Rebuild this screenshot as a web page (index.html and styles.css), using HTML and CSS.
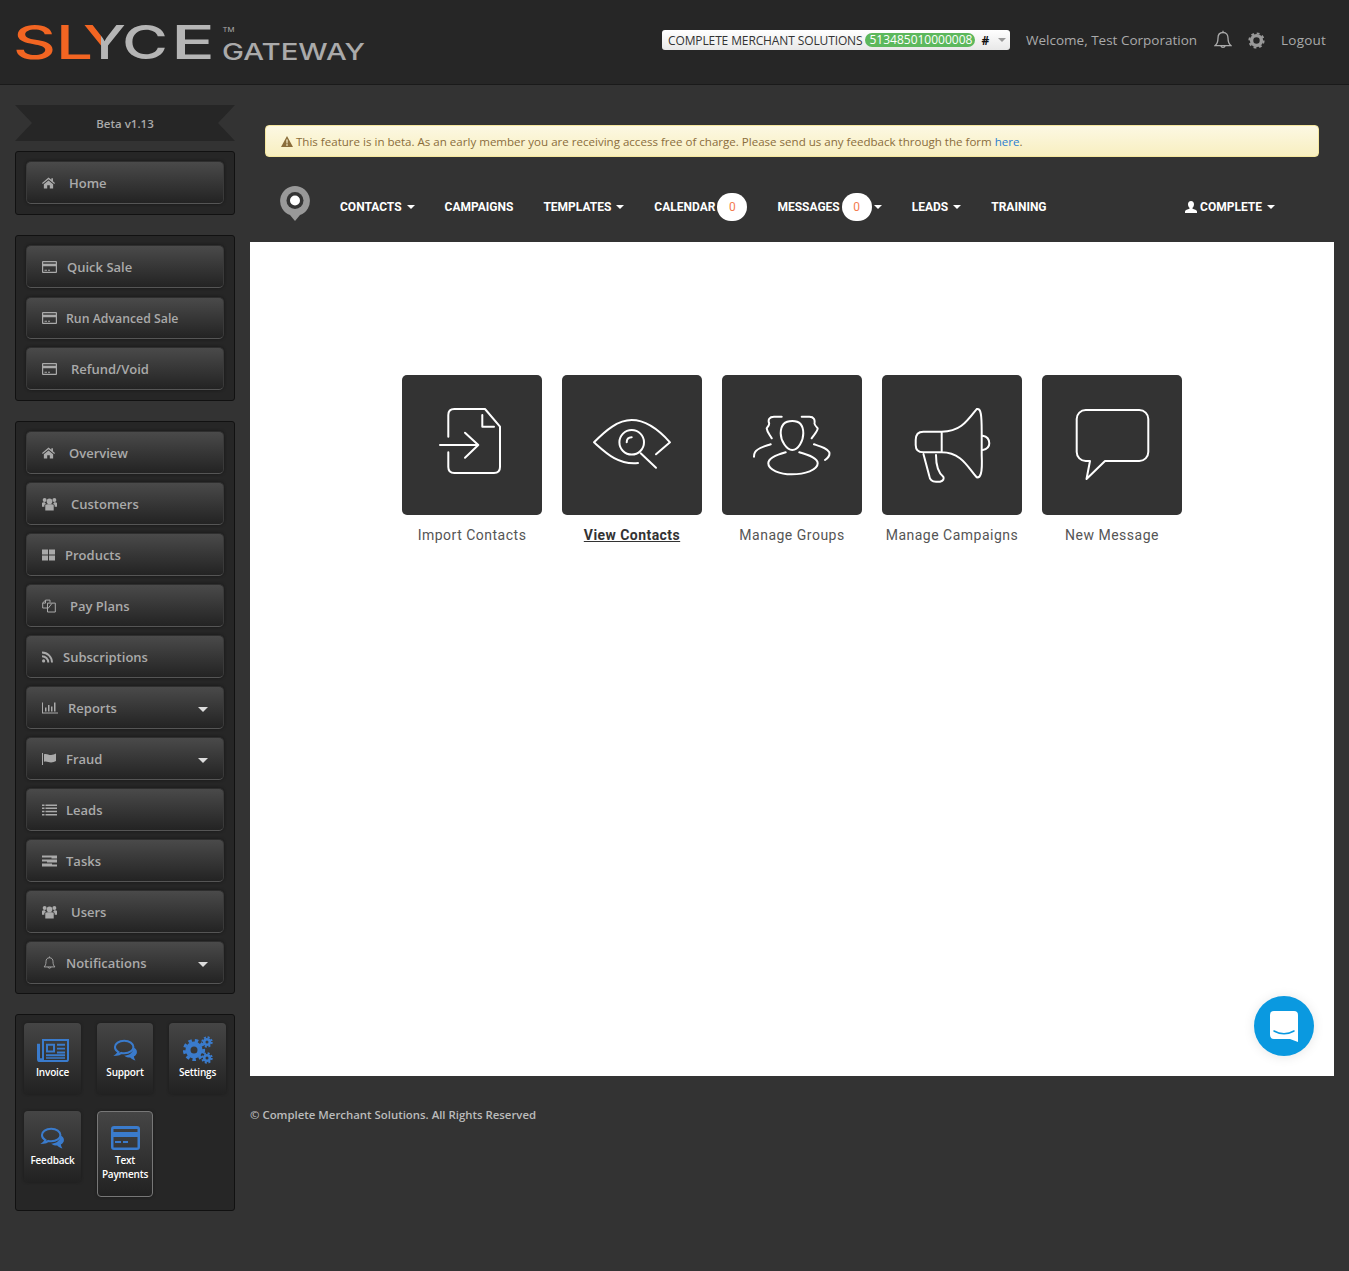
FILE: index.html
```html
<!DOCTYPE html>
<html lang="en">
<head>
    <meta charset="UTF-8">
    <meta name="viewport" content="width=device-width, initial-scale=1.0">
    <title>Slyce Gateway</title>
    <link rel="stylesheet" href="styles.css">
</head>
<body>
    <svg class="defs" width="0" height="0">
        <defs>
            <linearGradient id="yFill" gradientUnits="userSpaceOnUse" x1="0" y1="0" x2="365" y2="0">
                <stop offset="0.2767" stop-color="#f26522"/>
                <stop offset="0.2767" stop-color="#b5b5b5"/>
            </linearGradient>
            <symbol id="i-home" viewBox="0 0 14 12">
                <path d="M7 0 0 6l.8 1L7 1.900 13.200 7l.8-1-2.200-1.900V1h-1.700v1.600z"/>
                <path d="M7 3.200 2 7.400V12h3.600V8.400h2.800V12H12V7.400z"/>
            </symbol>
            <symbol id="i-card" viewBox="0 0 15 12">
                <path fill-rule="evenodd" d="M1 0h13a1 1 0 0 1 1 1v10a1 1 0 0 1-1 1H1a1 1 0 0 1-1-1V1a1 1 0 0 1 1-1zm.2 1.200v1.600h12.600V1.200zm0 4v5.600h12.600V5.200zM2.500 8.800h2.500v1H2.500zm3.500 0h2v1H6z"/>
            </symbol>
            <symbol id="i-users" viewBox="0 0 16 14">
                <circle cx="8" cy="4.200" r="3"/>
                <circle cx="2.800" cy="2.800" r="2.100"/>
                <circle cx="13.200" cy="2.800" r="2.100"/>
                <path d="M3.500 8.500C3.500 7.500 5 7.300 8 7.300s4.500.2 4.500 1.200V14h-9z"/>
                <path d="M0 5.800C0 5.300 1.300 5 3 5c.4 1 1 1.700 1.700 2-1.500.2-2.200.8-2.200 1.700V10H0zM16 5.800c0-.5-1.300-.8-3-.8-.4 1-1 1.700-1.700 2 1.500.2 2.200.8 2.200 1.700V10H16z"/>
            </symbol>
            <symbol id="i-grid" viewBox="0 0 13 11">
                <path d="M0 0h6v5H0zM7 0h6v5H7zM0 6h6v5H0zM7 6h6v5H7z"/>
            </symbol>
            <symbol id="i-files" viewBox="0 0 14 13">
                <path fill="none" stroke="currentColor" d="M5 8.500H.7V3.500L3.500.6H8V3M5.500 3.600h4L13.300 3.600V12.500H5.500zM3.500.6v3H.7M10 3.800 6 9"/>
            </symbol>
            <symbol id="i-rss" viewBox="0 0 11 11">
                <circle cx="1.600" cy="9.400" r="1.600"/>
                <path fill="none" stroke="currentColor" stroke-width="1.900" d="M0 4.700a6.300 6.300 0 0 1 6.300 6.300M0 1a10 10 0 0 1 10 10"/>
            </symbol>
            <symbol id="i-chart" viewBox="0 0 16 11">
                <path d="M0 0h1v10h15v1H0zM3 5h1.500v4H3zM6 2.500h1.500V9H6zM9 4h1.500v5H9zM12 0h1.500v9H12z"/>
            </symbol>
            <symbol id="i-flag" viewBox="0 0 15 12">
                <path d="M0 0h1v12H0zM2 1.200c3-1 4.500 1 7 .8 2-.1 3.500-.8 5-1.500V8c-1.500.8-3 1.400-5 1.500C6.500 9.500 5 8 2 8.800z"/>
            </symbol>
            <symbol id="i-list" viewBox="0 0 15 11">
                <path d="M0 0h2.500v1.600H0zM3.500 0H15v1.600H3.500zM0 3h2.500v1.600H0zM3.500 3H15v1.600H3.500zM0 6.200h2.500v1.600H0zM3.500 6.200H15v1.600H3.500zM0 9.400h2.500V11H0zM3.500 9.400H15V11H3.500z"/>
            </symbol>
            <symbol id="i-tasks" viewBox="0 0 15 11">
                <path d="M0 0h15v3H9.500V2H0zM0 4h15v3H5V6H0zM0 8h10v1h5v2H0z"/>
            </symbol>
            <symbol id="i-bell" viewBox="0 0 18 20">
                <path fill="none" stroke="currentColor" stroke-width="1.300" d="M9 2.500c-3.500 0-5 2.500-5 5.500 0 4-1 6-2.800 7.600h15.600C15 14 14 12 14 8c0-3-1.500-5.500-5-5.500zM9 .7v1.800M6.800 15.800a2.300 2.300 0 0 0 4.400 0"/>
            </symbol>
            <symbol id="i-gear" viewBox="0 0 18 18">
                <circle cx="9" cy="9" r="5.200" fill="none" stroke="currentColor" stroke-width="3.600"/>
                <circle cx="9" cy="9" r="7.600" fill="none" stroke="currentColor" stroke-width="2" stroke-dasharray="3 2.970"/>
            </symbol>
            <symbol id="i-talk" viewBox="0 0 27 25">
                <path fill="none" stroke="currentColor" stroke-width="2.300" d="M12 2C6 2 1.500 5 1.500 9.200c0 2.500 1.600 4.500 4 5.700-.4 1.200-1 2-2.200 3 2.200-.2 4-1 5.500-2.100 1 .2 2 .3 3.200.3 6 0 10.500-3 10.500-6.900S18 2 12 2z"/>
                <path d="M22.500 9.500c2.500 1.200 4 3.200 4 5.300 0 2.200-1.300 4-3.500 5.200.2 1.500.8 3 1.800 4.500-2.500-.6-4.500-1.800-6-3.400-2.500 0-5-.8-6.800-2.200 5.500 0 10.500-3 10.500-9.400z"/>
            </symbol>
        </defs>
    </svg>

    <header class="topbar">
        <svg class="logo" width="380" height="84" viewBox="0 0 380 84">
            <text class="logo-big logo-orange" x="13" y="59" textLength="43" lengthAdjust="spacingAndGlyphs">S</text>
            <text class="logo-big logo-orange" x="56" y="59" textLength="37" lengthAdjust="spacingAndGlyphs">L</text>
            <text class="logo-big" x="83" y="59" textLength="43" lengthAdjust="spacingAndGlyphs" fill="url(#yFill)">Y</text>
            <text class="logo-big logo-gray" x="122" y="59" textLength="46" lengthAdjust="spacingAndGlyphs">C</text>
            <text class="logo-big logo-gray" x="171" y="59" textLength="44" lengthAdjust="spacingAndGlyphs">E</text>
            <text class="logo-tm" x="222.500" y="31.500" textLength="12" lengthAdjust="spacingAndGlyphs">TM</text>
            <text class="logo-sub" x="222" y="60" textLength="143" lengthAdjust="spacingAndGlyphs">GATEWAY</text>
        </svg>
        <div class="top-right">
            <div class="merchant">
                <span class="merchant-name">COMPLETE MERCHANT SOLUTIONS</span>
                <span class="mid">513485010000008</span>
                <span class="hash">#</span>
                <span class="merchant-caret"></span>
            </div>
            <span class="welcome">Welcome, Test Corporation</span>
            <svg class="top-icon bell"><use href="#i-bell"/></svg>
            <svg class="top-icon gear"><use href="#i-gear"/></svg>
            <span class="logout">Logout</span>
        </div>
    </header>

    <div class="layout">
        <aside class="sidebar">
            <div class="ribbon">Beta v1.13</div>

            <div class="panel">
                <a class="side-btn"><svg class="ico w13"><use href="#i-home"/></svg><span class="lbl wide">Home</span></a>
            </div>

            <div class="panel">
                <a class="side-btn first"><svg class="ico w15"><use href="#i-card"/></svg><span class="lbl">Quick Sale</span></a>
                <a class="side-btn short"><svg class="ico w15"><use href="#i-card"/></svg><span class="lbl small">Run Advanced Sale</span></a>
                <a class="side-btn"><svg class="ico w15"><use href="#i-card"/></svg><span class="lbl wide">Refund/Void</span></a>
            </div>

            <div class="panel panel-long">
                <a class="side-btn"><svg class="ico w13"><use href="#i-home"/></svg><span class="lbl wide">Overview</span></a>
                <a class="side-btn"><svg class="ico w15"><use href="#i-users"/></svg><span class="lbl wide">Customers</span></a>
                <a class="side-btn"><svg class="ico w13"><use href="#i-grid"/></svg><span class="lbl">Products</span></a>
                <a class="side-btn"><svg class="ico w14"><use href="#i-files"/></svg><span class="lbl wide">Pay Plans</span></a>
                <a class="side-btn"><svg class="ico w11"><use href="#i-rss"/></svg><span class="lbl">Subscriptions</span></a>
                <a class="side-btn"><svg class="ico w16"><use href="#i-chart"/></svg><span class="lbl">Reports</span><span class="caret"></span></a>
                <a class="side-btn"><svg class="ico w15"><use href="#i-flag"/></svg><span class="lbl narrow">Fraud</span><span class="caret"></span></a>
                <a class="side-btn"><svg class="ico w15"><use href="#i-list"/></svg><span class="lbl narrow">Leads</span></a>
                <a class="side-btn"><svg class="ico w15"><use href="#i-tasks"/></svg><span class="lbl narrow">Tasks</span></a>
                <a class="side-btn"><svg class="ico w15"><use href="#i-users"/></svg><span class="lbl wide">Users</span></a>
                <a class="side-btn"><svg class="ico w15"><use href="#i-bell"/></svg><span class="lbl narrow">Notifications</span><span class="caret"></span></a>
            </div>

            <div class="panel apps">
                <a class="app">
                    <div class="app-art">
                        <svg class="app-ico" width="32" height="23" viewBox="0 0 32 24" preserveAspectRatio="none">
                            <path fill-rule="evenodd" d="M5 0h27v21a3 3 0 0 1-3 3H3a3 3 0 0 1-3-3V5h3v15h2zm2 2v20h22a1 1 0 0 0 1-1V2zm2 3h9v9H9zm2 2v5h5V7zm9-2h8v2h-8zm0 4h8v2h-8zm0 4h8v2h-8zM9 16h19v2H9zm0 3h19v1.500H9z"/>
                        </svg>
                    </div>
                    <span>Invoice</span>
                </a>
                <a class="app">
                    <div class="app-art"><svg class="app-ico" width="27" height="22"><use href="#i-talk"/></svg></div>
                    <span>Support</span>
                </a>
                <a class="app">
                    <div class="app-art">
                        <svg class="app-ico" width="30" height="28" viewBox="0 0 30 28">
                            <circle cx="11" cy="14" r="6" fill="none" stroke="currentColor" stroke-width="5"/>
                            <circle cx="11" cy="14" r="9.600" fill="none" stroke="currentColor" stroke-width="3" stroke-dasharray="3.500 3.040"/>
                            <circle cx="24" cy="6" r="2.800" fill="none" stroke="currentColor" stroke-width="2.600"/>
                            <circle cx="24" cy="6" r="4.700" fill="none" stroke="currentColor" stroke-width="2" stroke-dasharray="2 1.700"/>
                            <circle cx="24" cy="22" r="2.800" fill="none" stroke="currentColor" stroke-width="2.600"/>
                            <circle cx="24" cy="22" r="4.700" fill="none" stroke="currentColor" stroke-width="2" stroke-dasharray="2 1.700"/>
                        </svg>
                    </div>
                    <span>Settings</span>
                </a>
                <a class="app">
                    <div class="app-art"><svg class="app-ico" width="27" height="22"><use href="#i-talk"/></svg></div>
                    <span>Feedback</span>
                </a>
                <a class="app app-active">
                    <div class="app-art">
                        <svg class="app-ico" width="29" height="24" viewBox="0 0 29 24">
                            <path fill-rule="evenodd" d="M3 0h23a3 3 0 0 1 3 3v18a3 3 0 0 1-3 3H3a3 3 0 0 1-3-3V3a3 3 0 0 1 3-3zm-.5 3v3h24V3zm0 8v10.500h24V11zM4 15h6v2H4zm8 0h5v2h-5z"/>
                        </svg>
                    </div>
                    <span>Text<br>Payments</span>
                </a>
            </div>
        </aside>

        <main class="main">
            <div class="alert">
                <svg class="alert-ico" width="12" height="11" viewBox="0 0 12 11"><path fill-rule="evenodd" d="M6 0l6 11H0zM5.300 3.500l.2 4h1l.2-4zm0 4.800v1.400h1.400V8.300z"/></svg>
                <span>This feature is in beta. As an early member you are receiving access free of charge. Please send us any feedback through the form <a class="alert-link">here</a>.</span>
            </div>

            <nav class="subnav">
                <svg class="pin" width="30" height="35" viewBox="0 0 30 35">
                    <path fill="#999" d="M15 0a15 15 0 0 1 5 29.100L15 35l-5-5.900A15 15 0 0 1 15 0z"/>
                    <circle cx="15" cy="14.500" r="8.500" fill="#333"/>
                    <circle cx="15" cy="14.500" r="5" fill="#fff"/>
                </svg>
                <a class="nav-link">CONTACTS<span class="nav-caret"></span></a>
                <a class="nav-link">CAMPAIGNS</a>
                <a class="nav-link">TEMPLATES<span class="nav-caret"></span></a>
                <a class="nav-link">CALENDAR<span class="count">0</span></a>
                <a class="nav-link">MESSAGES<span class="count">0</span><span class="nav-caret tight"></span></a>
                <a class="nav-link">LEADS<span class="nav-caret"></span></a>
                <a class="nav-link">TRAINING</a>
                <a class="nav-link nav-user">
                    <svg width="12" height="12" viewBox="0 0 12 12"><path fill="#fff" d="M6 0c1.900 0 3 1.300 3 3.200 0 1.500-.6 2.900-1.500 3.500v1.100c1.800.5 4.500 1.200 4.500 2.700V12H0v-1.500c0-1.500 2.700-2.200 4.500-2.700V6.700C3.600 6.100 3 4.700 3 3.200 3 1.300 4.100 0 6 0z"/></svg><span>COMPLETE</span><span class="nav-caret"></span>
                </a>
            </nav>

            <section class="content">
                <div class="tiles">
                    <a class="tile">
                        <span class="tile-box">
                            <svg viewBox="0 0 140 140"><path d="M46.300 61.700V40q0-6 6-6H83l15 17.700V92q0 6-6 6H52.300q-6 0-6-6V77.300M80.300 40v11.700H92M38 70h38.300M63 57.700 76.300 70 63 82.700"/></svg>
                        </span>
                        <span class="tile-name">Import Contacts</span>
                    </a>
                    <a class="tile tile-current">
                        <span class="tile-box">
                            <svg viewBox="0 0 140 140"><path d="M76 88C56 90 44 78 32 67.300 44 55 56 45 69.700 45 84 45 97 55 108 67.300L94 79.300M78.700 78.300 94 92.700M64.700 67.300q0-5 5-5"/><circle cx="69.700" cy="67.300" r="12.300"/></svg>
                        </span>
                        <span class="tile-name">View Contacts</span>
                    </a>
                    <a class="tile">
                        <span class="tile-box">
                            <svg viewBox="0 0 140 140"><path d="M70.300 46C63 46 58.700 50 58.700 58.300 58.700 66 64.700 75 70.300 75 76.300 75 81.300 66 81.300 58.300 81.300 50 77 46 70.300 46zM63.700 77.300C54 80 46.300 83 46.300 88.300 46.300 95 58 99.300 69.700 99.300 83 99.300 95.700 95 95.700 88.300 95.700 83 87 80 77.300 77.300M59.700 41.700H52C47 41.700 46 45 47 48 48 50 44.700 53 44.700 53.300 45 57 48 60 49.700 63.300M79.700 41.700H87.500C92 41.700 93 45 92.500 48 92 50 95.700 53 95.700 53.300 95.500 57 91.500 60 89.700 63.300M48.700 69.300C42 71.500 35 73 33 77.300 32 79 32 80 32 81.700M92 69.300C99 71.500 105 73 107.300 77.300 108 80 106 83 103 85"/></svg>
                        </span>
                        <span class="tile-name">Manage Groups</span>
                    </a>
                    <a class="tile">
                        <span class="tile-box">
                            <svg viewBox="0 0 140 140"><path d="M59.700 56.700C78 56.700 84.700 46.700 94.700 34 99 33 99.700 40 99.700 56.700V80C100.700 100 98 103 94.700 102.300 86.300 93.300 79.700 77.300 59.700 77.300M59.700 56.700H41.300Q33.700 56.700 33.700 65V70Q33.700 77.300 41.300 77.300H59.700ZM41.500 79.300 47.300 101Q48 106.700 54 106.700H58Q63 105 61.300 101.700 54 96 54 80M100.700 60.700Q107.300 62 107.300 68.300 107.300 74 100.700 75"/></svg>
                        </span>
                        <span class="tile-name">Manage Campaigns</span>
                    </a>
                    <a class="tile">
                        <span class="tile-box">
                            <svg viewBox="0 0 140 140"><path d="M43.700 35H97.300a9 9 0 0 1 9 9V77a9 9 0 0 1-9 9H63L44.500 104 48 86H43.700a9 9 0 0 1-9-9V44a9 9 0 0 1 9-9z"/></svg>
                        </span>
                        <span class="tile-name">New Message</span>
                    </a>
                </div>

                <a class="chat">
                    <svg width="28" height="31" viewBox="0 0 28 31">
                        <path fill="#fff" d="M4 0h20a4 4 0 0 1 4 4v27l-8-3H4a4 4 0 0 1-4-4V4a4 4 0 0 1 4-4z"/>
                        <path fill="none" stroke="#0a99e0" stroke-width="1.500" stroke-linecap="round" d="M4 20c6 3.500 14 3.500 20 0"/>
                    </svg>
                </a>
            </section>

            <footer class="foot">© Complete Merchant Solutions. All Rights Reserved</footer>
        </main>
    </div>
</body>
</html>
```

FILE: styles.css
```css
* {
    box-sizing: border-box;
}
body {
    margin: 0;
    min-height: 1271px;
    background-color: #333;
    font-family: "Open Sans", "Liberation Sans", sans-serif;
    overflow: hidden;
}
.defs {
    display: block;
    height: 0;
}

/* top bar */
.topbar {
    display: flex;
    align-items: center;
    justify-content: space-between;
    height: 85px;
    background-color: #262626;
    border-bottom: 1px solid #1a1a1a;
}
.logo {
    display: block;
    flex: none;
}
.logo-big {
    font-family: Inter, sans-serif;
    font-size: 47px;
    font-weight: 500;
}
.logo-orange {
    fill: #f26522;
}
.logo-gray {
    fill: #b5b5b5;
}
.logo-tm {
    font-family: Inter, sans-serif;
    font-size: 6px;
    fill: #aaa;
}
.logo-sub {
    font-family: Inter, sans-serif;
    font-size: 23px;
    font-weight: 500;
    fill: #aaa;
}
.top-right {
    display: flex;
    align-items: center;
    padding: 0 23px 4px 0;
    color: #aaa;
    font-size: 13.500px;
}
.merchant {
    display: flex;
    align-items: center;
    width: 348px;
    height: 20px;
    padding-left: 6px;
    margin-right: 16px;
    background: linear-gradient(#fff, #e8e8e8);
    border-radius: 3px;
    color: #333;
    font-size: 12px;
}
.merchant-name {
    letter-spacing: -0.12px;
}
.mid {
    margin-left: 3px;
    padding: 0 3px 0 4px;
    height: 14px;
    line-height: 14px;
    border-radius: 7px;
    background-color: #5cb85c;
    color: #fff;
}
.hash {
    margin-left: 6px;
    font-weight: 700;
    color: #111;
}
.merchant-caret {
    margin-left: 9px;
    border-top: 4px solid #999;
    border-left: 4px solid transparent;
    border-right: 4px solid transparent;
}
.welcome {
    margin-right: 17px;
}
.top-icon {
    width: 18px;
    height: 20px;
    color: #aaa;
}
.bell {
    margin-right: 16px;
}
.gear {
    width: 17px;
    height: 17px;
    margin-right: 16px;
    color: #999;
}
.logout {
    letter-spacing: 0.2px;
}

/* layout */
.layout {
    display: flex;
    align-items: flex-start;
    padding-left: 15px;
}
.sidebar {
    flex: none;
    width: 220px;
    padding-top: 20px;
}
.ribbon {
    height: 36px;
    margin-bottom: 10px;
    background-color: #262626;
    clip-path: polygon(0 0, 100% 0, calc(100% - 17px) 50%, 100% 100%, 0 100%, 17px 50%);
    color: #aaa;
    font-size: 11.500px;
    font-weight: 600;
    line-height: 37px;
    text-align: center;
}
.panel {
    display: flex;
    flex-direction: column;
    gap: 8px;
    padding: 9px 10px 10px;
    margin-bottom: 20px;
    background-color: #262626;
    border: 1px solid #111;
    border-radius: 3px;
}
.panel-long {
    padding-bottom: 9px;
}
.side-btn {
    display: flex;
    align-items: center;
    height: 43px;
    padding-left: 15px;
    background: linear-gradient(#4a4a4a, #232323);
    border: 1px solid #3a3a3a;
    border-top-color: #2e2e2e;
    border-bottom-color: #555;
    border-radius: 5px;
    box-shadow: 0 0 3px #151515;
    color: #aaa;
    font-size: 13px;
    font-weight: 600;
}
.side-btn.first {
    margin-bottom: 1px;
}
.side-btn.short {
    height: 42px;
}
.ico {
    flex: none;
    height: 14px;
    fill: #aaa;
    color: #aaa;
}
.w11 { width: 11px; }
.w13 { width: 13px; }
.w14 { width: 14px; }
.w15 { width: 15px; }
.w16 { width: 16px; }
.lbl {
    margin-left: 10px;
}
.lbl.wide {
    margin-left: 14px;
}
.lbl.narrow {
    margin-left: 9px;
}
.lbl.small {
    margin-left: 9px;
    font-size: 12.300px;
}
.caret {
    margin: 4px 15px 0 auto;
    border-top: 5px solid #ddd;
    border-left: 5px solid transparent;
    border-right: 5px solid transparent;
}

/* app shortcuts */
.apps {
    display: grid;
    grid-template-columns: 57px 56px 57px;
    column-gap: 16px;
    row-gap: 17px;
    align-items: start;
    padding: 8px 8px 13px;
    margin-bottom: 0;
}
.app {
    display: flex;
    flex-direction: column;
    align-items: center;
    height: 71px;
    padding-top: 13px;
    background: linear-gradient(#454545, #222);
    border-radius: 4px;
    box-shadow: 0 0 3px #1a1a1a;
    color: #fff;
    font-size: 10px;
    font-weight: 600;
    letter-spacing: -0.2px;
    line-height: 14px;
    text-align: center;
}
.app-art {
    display: flex;
    align-items: center;
    justify-content: center;
    height: 28px;
    margin-bottom: 1px;
}
.app-ico {
    display: block;
    flex: none;
    fill: #3a7bcc;
    color: #3a7bcc;
}
.app-active {
    height: 86px;
    padding-top: 12px;
    border: 1px solid #777;
}

/* main column */
.main {
    flex: none;
    width: 1084px;
    margin-left: 15px;
}
.alert {
    display: flex;
    align-items: center;
    height: 32px;
    margin: 40px 15px 0;
    padding-left: 15px;
    background: linear-gradient(#fcf8e3, #f8efc0);
    border: 1px solid #f5e79e;
    border-radius: 4px;
    color: #8a6d3b;
    font-size: 11.560px;
}
.alert-ico {
    flex: none;
    margin-right: 3px;
    fill: #8a6d3b;
}
.alert-link {
    color: #2a7fd0;
}
.subnav {
    display: flex;
    align-items: center;
    gap: 30px;
    height: 70px;
    margin-top: 15px;
    padding: 0 59px 0 30px;
}
.pin {
    flex: none;
    margin-top: -8px;
}
.nav-link {
    display: flex;
    align-items: center;
    color: #fff;
    font-family: Roboto, sans-serif;
    font-size: 12px;
    font-weight: 700;
    white-space: nowrap;
}
.nav-caret {
    margin-left: 5px;
    border-top: 4px solid #fff;
    border-left: 4px solid transparent;
    border-right: 4px solid transparent;
}
.nav-caret.tight {
    margin-left: 2px;
}
.count {
    width: 30px;
    height: 28px;
    margin-left: 2px;
    background-color: #fff;
    border-radius: 14px;
    color: #f47b50;
    font-weight: 400;
    line-height: 28px;
    text-align: center;
}
.nav-user {
    margin-left: auto;
}
.nav-user svg {
    margin-right: 3px;
}

/* white area */
.content {
    position: relative;
    height: 834px;
    padding-top: 133px;
    background-color: #fff;
}
.tiles {
    display: flex;
    justify-content: center;
    gap: 20px;
}
.tile {
    display: flex;
    flex-direction: column;
    align-items: center;
    width: 140px;
    color: #555;
    font-family: Roboto, sans-serif;
    font-size: 14px;
    letter-spacing: 0.5px;
}
.tile-box {
    display: block;
    width: 140px;
    height: 140px;
    margin-bottom: 12px;
    background-color: #333;
    border-radius: 5px;
}
.tile-box svg {
    display: block;
    fill: none;
    stroke: #fff;
    stroke-width: 2;
    stroke-linecap: round;
    stroke-linejoin: round;
}
.tile-name {
    white-space: nowrap;
}
.tile-current {
    color: #333;
    font-weight: 700;
    letter-spacing: 0.45px;
    text-decoration: underline;
}
.chat {
    position: absolute;
    right: 20px;
    bottom: 20px;
    display: flex;
    align-items: center;
    justify-content: center;
    width: 60px;
    height: 60px;
    background-color: #0a99e0;
    border-radius: 50%;
    box-shadow: 0 1px 12px rgba(0, 0, 0, 0.1);
}
.foot {
    margin-top: 31px;
    color: #bbb;
    font-size: 11.400px;
    font-weight: 600;
}
```
